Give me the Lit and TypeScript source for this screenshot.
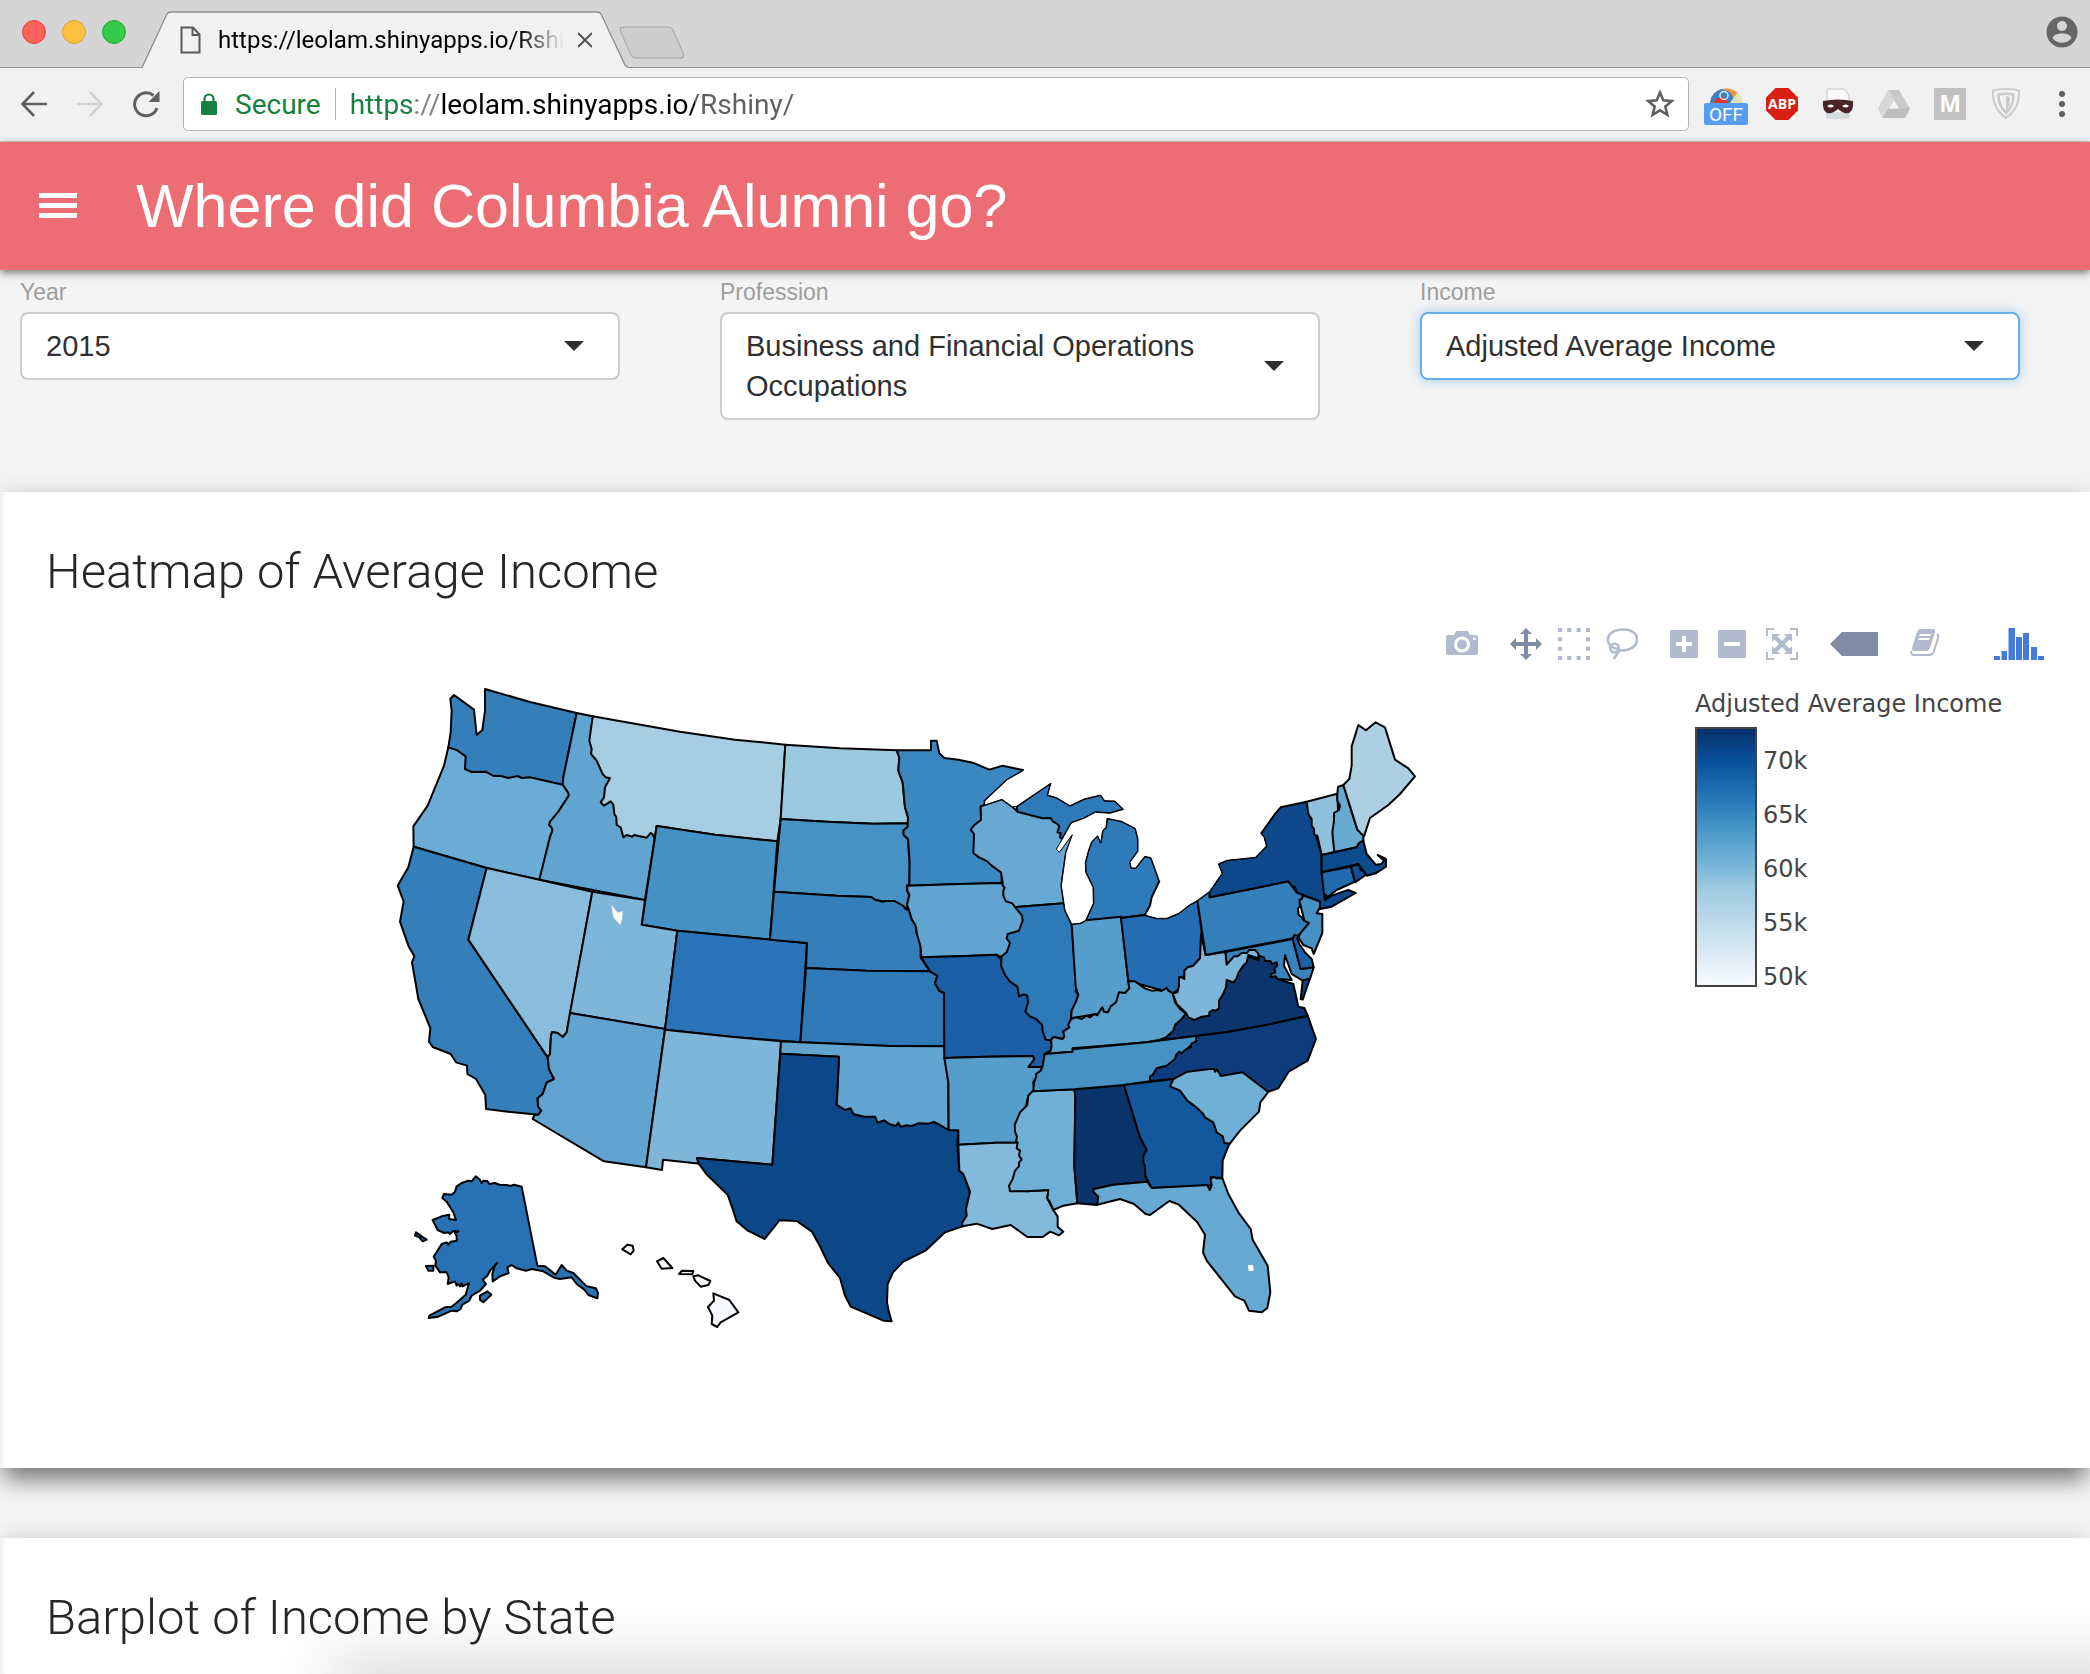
import { LitElement, html, svg, css } from "lit";
import { customElement, property } from "lit/decorators.js";

/* ---------- map data: outlines are drawn on a grid of thirds of a pixel ---------- */

type Sheet = { x: number; y: number };
const WEST: Sheet = { x: 380, y: 670 };
const PLAINS: Sheet = { x: 660, y: 700 };
const LAKES: Sheet = { x: 900, y: 720 };
const NORTHEAST: Sheet = { x: 1140, y: 700 };
const SOUTH: Sheet = { x: 900, y: 1000 };
const ATLANTIC: Sheet = { x: 1150, y: 900 };
const PACIFIC: Sheet = { x: 400, y: 1160 };

interface Region {
  name: string;
  sheet: Sheet;
  fill: string;
  d: string;
}

const r = (name: string, sheet: Sheet, fill: string, d: string): Region => ({ name, sheet, fill, d });

const REGIONS: Region[] = [
  r("Oregon", WEST, "#6aacd5", "M205,235L400,200 548,335 590,375 540,460 478,632 320,597 101,533 100,472 143,410 192,290Z"),
  r("Washington", WEST, "#347fba", "M222,78L282,122 290,198 307,183 315,125 315,60 450,99 590,132 550,325 548,347 450,325 425,327 413,321 385,327 360,320 340,321 317,308 275,309 255,300 257,262 230,243 205,235 212,190 215,125 211,90Z"),
  r("Montana", WEST, "#a6cce1", "M638,142L900,188 1065,212 1216,227 1202,450 1192,517 1005,497 830,471 824,510 720,530 650,400 615,250Z"),
  r("Idaho", WEST, "#62a4d0", "M590,132L638,142 628,215 635,240 633,255 650,275 668,315 677,325 690,328 675,355 672,385 662,400 672,410 692,397 700,407 703,435 709,445 710,468 722,475 730,505 740,498 757,503 762,498 800,506 812,492 818,496 824,510 795,693 478,632 510,503 517,485 515,476 507,468 510,458 535,428 566,380 565,372 548,347 550,325Z"),
  r("Wyoming", WEST, "#4591c4", "M830,471L1005,497 1192,517 1170,812 1065,802 892,785 785,767Z"),
  r("California", WEST, "#347fba", "M101,533L320,597 265,812 503,1165 507,1200 522,1230 500,1241 488,1275 473,1288 474,1312 484,1325 475,1337 400,1330 318,1320 316,1278 288,1230 262,1215 261,1190 228,1180 212,1155 158,1134 147,1118 151,1077 115,990 96,880 103,862 85,830 60,758 71,697 53,650 85,595Z"),
  r("Nevada", WEST, "#8abddb", "M320,597L637,668 560,1090 548,1104 533,1092 517,1089 513,1098 510,1155 503,1165 265,812Z"),
  r("Utah", WEST, "#7eb6d9", "M637,668L795,693 785,767 892,785 855,1080 570,1032Z"),
  r("Arizona", WEST, "#62a4d0", "M570,1032L855,1080 798,1495 672,1477 458,1350 463,1338 475,1337 484,1325 474,1312 473,1288 488,1275 500,1241 522,1230 507,1200 503,1165 510,1155 513,1098 517,1089 533,1092 548,1104 560,1090Z"),
  r("Colorado", PLAINS, "#2a73b8", "M52,695L225,712 441,732 421,1030 220,1014 15,992Z"),
  r("New Mexico", PLAINS, "#7eb6d9", "M15,992L220,1014 363,1027 337,1397 111,1377 120,1394 9,1382 6,1413 -42,1405Z"),
  r("North Dakota", PLAINS, "#9bc9e0", "M376,137L540,148 710,154 718,175 715,215 728,250 735,325 744,355 744,373 640,374 500,368 362,360Z"),
  r("South Dakota", PLAINS, "#4692c5", "M362,360L500,368 640,374 744,373 743,383 730,395 731,408 744,420 749,490 748,557 741,560 741,575 748,588 741,618 747,633 735,625 703,606 668,607 645,602 633,594 530,590 342,578Z"),
  r("Nebraska", PLAINS, "#347fba", "M342,578L530,590 633,594 645,602 668,608 678,606 703,606 730,621 737,631 747,633 755,660 767,680 769,700 778,722 782,745 782,775 810,817 620,815 438,807 441,732 330,722Z"),
  r("Kansas", PLAINS, "#2f79b7", "M438,807L620,815 810,817 832,830 825,853 838,875 852,882 852,1042 690,1041 421,1030Z"),
  r("Oklahoma", PLAINS, "#61a4d0", "M363,1027L421,1030 690,1041 852,1042 855,1080 865,1150 866,1293 700,1320 530,1218 537,1073 361,1064Z"),
  r("Texas", PLAINS, "#0c4787", "M361,1064L537,1073 530,1218 555,1233 572,1228 580,1245 612,1253 645,1253 653,1271 672,1264 690,1276 707,1281 715,1271 722,1283 740,1279 755,1281 775,1273 805,1274 822,1269 840,1278 866,1293 895,1294 892,1337 898,1415 910,1425 930,1478 918,1530 922,1550 906,1575 908,1582 855,1600 798,1654 730,1688 699,1720 683,1755 681,1810 687,1840 695,1867 670,1865 572,1823 555,1790 540,1737 504,1692 479,1640 456,1598 410,1566 358,1564 314,1620 262,1594 230,1567 218,1530 203,1487 138,1424 115,1392 111,1377 337,1397Z"),
  r("Minnesota", LAKES, "#3b87bf", "M-10,94L93,94 93,65 110,65 118,103 133,117 175,122 218,131 268,152 308,140 371,154 322,182 254,246 254,258 242,262 243,303 305,460 305,492 180,495 21,500 28,497 29,430 24,360 11,348 10,335 23,323 24,295 15,265 8,190 -5,155 -2,115Z"),
  r("Iowa", LAKES, "#62a4d0", "M21,500L180,495 305,492 360,564 390,600 350,680 325,715 298,712 289,707 180,712 64,715 62,685 51,645 47,620 35,600 27,573 21,558 28,528 22,515Z"),
  r("Wisconsin", LAKES, "#67a9d3", "M242,262L306,241 337,263 350,275 500,300 520,345 498,400 484,500 492,553 345,564 337,553 318,547 310,530 310,515 314,506 308,500 308,490 303,460 275,440 262,427 237,415 220,402 222,345 212,332 224,317 243,303Z"),
  r("Michigan, upper", LAKES, "#2f7ab8", "M350,262L453,192 443,228 470,236 510,260 552,240 602,228 614,245 645,246 671,271 630,283 586,280 552,298 514,312 487,360 480,355 482,342 472,340 478,322 472,315 458,307 452,297 427,298 352,278Z"),
  r("Michigan", LAKES, "#2f7ab8", "M557,604L580,553 579,505 557,460 556,430 566,392 575,368 593,350 602,370 608,335 618,325 621,298 665,307 706,328 714,360 714,397 690,430 694,447 707,447 734,412 753,416 778,486 755,535 750,560 734,588 663,597Z"),
  r("Missouri", SOUTH, "#1b60a7", "M64,-125L180,-128 289,-133 305,-118 303,-100 440,30 453,124 455,140 452,155 434,165 430,190 427,204 385,204 403,180 398,171 260,173 133,177 132,-18 118,-25 105,-47 112,-70 90,-83Z"),
  r("Illinois", LAKES, "#2e79b7", "M345,564L492,553 495,573 515,615 529,803 527,818 535,828 527,850 515,875 513,900 505,918 508,925 490,937 493,953 487,960 460,954 453,964 437,962 428,937 426,917 408,900 390,892 376,878 384,850 382,830 372,826 357,832 352,803 330,788 315,768 303,740 305,712 320,700 330,672 320,658 323,645 357,635 368,605 366,590Z"),
  r("Indiana", LAKES, "#559dca", "M515,615L540,613 557,604 663,593 685,787 688,808 650,850 622,880 513,898 515,875 527,850 535,828 527,803Z"),
  r("Ohio", LAKES, "#246db3", "M663,597L734,588 770,598 800,598 836,583 868,558 893,544 905,640 902,715 880,740 858,752 835,812 818,823 685,787Z"),
  r("Kentucky", SOUTH, "#5ba1cd", "M453,124L460,114 487,120 493,113 490,97 508,85 505,78 513,60 530,55 545,60 560,50 570,55 583,45 592,49 600,35 607,25 612,38 624,40 632,22 648,10 657,-20 675,-18 688,-32 685,-53 705,-53 735,-32 755,-25 775,-27 785,-24 800,-33 805,-25 818,-17 825,10 842,32 858,43 855,55 845,68 828,82 820,98 798,118 780,122 740,130 518,148 518,158 434,165 452,155 455,140Z"),
  r("Arkansas", SOUTH, "#559dca", "M133,177L260,173 398,171 403,180 385,204 427,204 422,220 408,235 400,250 402,275 385,290 353,431 290,431 175,437 175,394 146,393 145,250Z"),
  r("Louisiana", SOUTH, "#83b9da", "M175,437L290,431 353,431 380,500 380,577 445,573 442,598 460,633 473,653 473,683 490,698 477,709 451,698 428,714 382,714 332,678 277,690 230,674 188,682 186,672 200,650 198,630 210,578 190,525 178,515Z"),
  r("Mississippi", SOUTH, "#6eafd6", "M398,276L523,271 526,290 523,500 532,613 490,620 460,633 450,610 442,598 445,573 380,577 330,577 327,560 338,540 345,515 357,502 357,490 365,482 357,470 360,455 350,448 353,431 348,428 351,413 345,398 344,378 360,340 382,318 385,290Z"),
  r("Alabama", SOUTH, "#0a336a", "M523,271L672,258 720,415 740,453 736,530 742,548 640,557 580,570 582,580 595,593 592,618 532,613 523,500 526,290Z"),
  r("Tennessee", SOUTH, "#4692c5", "M434,165L518,158 518,148 525,150 740,130 889,110 889,125 750,247 672,258 523,271 400,277 402,250 408,235 408,225 422,215 427,204 430,190Z"),
  r("North Carolina", SOUTH, "#0e3c7c", "M889,110L985,98 1100,77 1223,50 1248,120 1223,185 1166,218 1135,268 1106,278 900,260 820,240 750,247 750,232 758,228 770,208 800,200 825,180 828,168 838,158 843,163 860,150 872,145 875,133 889,128Z"),
  r("South Carolina", SOUTH, "#70b0d6", "M820,240L862,218 930,210 942,210 945,218 949,211 958,222 962,231 1028,220 1105,279 1081,310 1077,338 1020,395 988,436 940,430 860,380 795,270Z"),
  r("Georgia", SOUTH, "#13579d", "M672,258L820,240 810,262 840,275 862,305 885,322 892,328 908,343 915,355 940,370 950,400 968,412 973,432 988,434 968,485 967,537 932,535 935,560 922,560 755,567 736,530 735,500 730,490 730,470 740,453 720,415Z"),
  r("Florida", SOUTH, "#66a9d2", "M582,570L640,557 742,548 755,567 922,558 929,573 935,560 932,540 940,534 950,538 967,537 985,585 1015,640 1052,690 1058,722 1103,800 1111,880 1102,927 1085,940 1047,935 1033,905 1005,892 920,785 909,760 915,707 892,670 835,616 808,606 750,648 737,645 702,615 660,600 592,617 595,593 580,578Z"),
  r("Maryland", ATLANTIC, "#3984be", "M226,159L428,120 452,210 491,205 480,240 458,245 425,225 405,168 402,200 425,243 382,240 340,230 330,172 290,190 230,197Z"),
  r("Virginia", ATLANTIC, "#0c356e", "M25,424L48,415 70,395 75,378 95,360 108,342 200,240 290,170 325,185 328,170 342,175 345,185 362,187 365,195 380,190 382,200 373,207 376,220 363,225 362,235 377,232 382,240 430,255 445,323 463,327 473,350 350,377 235,398 139,410Z"),
  r("Virginia, eastern shore", ATLANTIC, "#0e4486", "M480,238L458,302 452,300 458,245Z"),
  r("West Virginia", ATLANTIC, "#7eb6d9", "M153,105L167,168 226,159 230,197 252,172 262,172 275,162 290,162 298,153 315,153 325,163 325,178 295,168 290,190 280,200 265,222 260,238 250,250 230,243 228,265 217,290 207,305 207,328 197,335 188,333 178,340 178,350 155,353 133,363 115,355 108,342 80,315 68,283 82,280 87,262 87,235 95,235 103,240 103,215 113,205 130,200 150,178Z"),
  r("Delaware", ATLANTIC, "#1c60a8", "M428,120L435,107 447,108 442,118 448,135 465,160 485,180 491,205 452,210Z"),
  r("New Jersey", NORTHEAST, "#4591c4", "M490,590L540,607 540,625 530,643 547,645 547,702 521,765 515,748 490,738 475,715 495,672 478,605Z"),
  r("Pennsylvania", NORTHEAST, "#347fba", "M172,604L209,577 209,595 445,547 470,580 490,588 485,600 478,603 480,622 474,628 476,648 485,655 492,665 507,672 475,710 463,708 458,718 197,768 185,690Z"),
  r("New York", NORTHEAST, "#0d488a", "M209,595L209,577 246,523 235,495 260,484 346,475 379,441 372,415 362,405 405,345 422,325 500,308 545,470 545,520 553,590 555,603 575,590 625,573 647,582 575,623 540,630 540,607 490,588 470,580 465,565 455,560 445,547Z"),
  r("Vermont", NORTHEAST, "#8fc0dc", "M500,308L592,284 597,400 583,460 545,468 532,410 523,408 522,390 515,380 515,360 505,345Z"),
  r("New Hampshire", NORTHEAST, "#67a9d1", "M592,284L594,264 610,258 652,392 670,410 670,425 650,445 583,460 577,400 582,365 582,342 597,333 600,320 592,305Z"),
  r("Maine", NORTHEAST, "#accfe2", "M610,258L628,240 635,200 635,142 655,78 678,94 707,70 735,85 765,182 805,208 825,232 780,285 745,318 690,357 672,412 652,392Z"),
  r("Massachusetts", NORTHEAST, "#0d4b8f", "M545,468L650,445 657,432 670,425 680,465 707,497 725,495 732,485 713,468 738,480 738,503 707,523 680,530 655,495 545,520Z"),
  r("Connecticut", NORTHEAST, "#236bb1", "M545,520L633,503 645,548 590,573 555,600 560,590 552,585Z"),
  r("Rhode Island", NORTHEAST, "#0f5095", "M633,503L655,495 662,513 672,518 677,528 645,550Z"),
  r("Alaska", PACIFIC, "#2872b4", "M227,52L238,60 245,72 250,65 262,66 268,75 285,72 300,78 320,78 332,81 342,77 365,83 412,320 435,322 467,347 485,318 500,335 520,342 560,382 588,388 594,402 592,418 565,408 553,392 530,375 515,355 480,360 462,356 430,337 395,330 378,335 350,328 335,318 322,325 326,342 300,352 278,367 277,345 285,318 292,312 270,335 262,350 248,362 258,375 240,395 215,410 208,425 187,437 182,450 170,457 155,455 115,473 86,477 88,470 135,445 155,443 175,427 197,407 207,373 195,378 187,382 185,373 180,382 175,375 170,380 165,367 143,375 146,355 140,340 120,340 106,320 108,305 101,293 125,255 140,250 145,257 152,248 170,245 170,232 165,222 175,217 160,216 150,225 145,220 133,222 113,213 98,183 125,172 148,167 147,180 168,183 160,160 140,128 127,117 132,105 155,107 165,98 170,82 185,72 205,65 215,67ZM48,220L65,232 80,242 68,247 58,235 45,230ZM78,321L100,320 100,335 85,335ZM240,410L262,397 274,407 250,430 240,422Z"),
  r("Hawaii", PACIFIC, "#f5f9fe", "M667,271L682,257 698,260 701,275 692,286ZM771,307L790,297 817,327 785,329ZM837,345L846,335 880,336 877,346ZM880,352L895,349 931,366 925,378 902,383 885,365ZM940,403L988,423 1015,460 962,490 952,504 935,495 937,470 924,444 942,425Z"),
];

/* Shorelines of the Great Lakes, and the points that close each one over open water. */
const SHORES = [
  {
    line: "M371,154L322,182 254,246 254,258 306,241 337,263 350,262 453,192 443,228 470,236 510,260 552,240 602,228 614,245 645,246 671,271",
    close: " 700,271 700,100 390,130Z",
  },
  {
    line: "M671,271L630,283 586,280 552,298 514,312 487,360 469,390 478,400 517,347 498,400 484,500 492,553 495,573 515,615 540,613 557,604 580,553 579,505 557,460 556,430 566,392 575,368 593,350 602,370 608,335 618,325 621,298 665,307 706,328 714,360 714,397 690,430 694,447 707,447 734,412 753,416 778,486",
    close: " 800,480 800,271Z",
  },
  {
    line: "M734,588L770,598 800,598 836,583 868,558 893,544 929,517 966,463 955,435 980,424 1066,415 1099,381 1092,355 1084,345",
    close: " 1060,330 850,480 800,560 765,583Z",
  },
];

const place = (s: Sheet) => `translate(${s.x} ${s.y}) scale(${1 / 3})`;

@customElement("income-map")
class IncomeMap extends LitElement {
  static styles = css`
    :host { display: block; }
    .map { display: block; width: 100%; height: auto; }
    .state { stroke: #000; stroke-width: 6; stroke-linejoin: round; }
    .water { fill: #fff; }
    .shore { fill: none; stroke: #000; stroke-width: 3; stroke-linejoin: round; }
  `;

  render() {
    return html`
      <svg class="map" viewBox="0 670 1695 680" role="img" aria-label="Map of the United States">
        ${REGIONS.map((s) => svg`<path class="state" fill=${s.fill} d=${s.d} transform=${place(s.sheet)}></path>`)}
        <g transform=${place(LAKES)}>
          ${SHORES.map((s) => svg`<path class="water" d=${s.line + s.close}></path><path class="shore" d=${s.line}></path>`)}
        </g>
        <path class="water" transform=${place(WEST)} d="M694,708L713,731 728,727 727,745 721,768 700,745Z"></path>
        <path class="water" transform=${place(SOUTH)} d="M1044,798h15l2,18h-15z"></path>
      </svg>
    `;
  }
}

@customElement("color-legend")
class ColorLegend extends LitElement {
  @property() heading = "";

  static styles = css`
    :host { display: block; color: #444; font: 24px/28px "DejaVu Sans", Verdana, sans-serif; white-space: nowrap; }
    .scale { display: flex; gap: 6px; margin-top: 9px; }
    .bar {
      width: 62px; height: 260px; box-sizing: border-box; border: 2px solid #444;
      background: linear-gradient(#08306b, #08519c 12.5%, #2171b5 25%, #4292c6 37.5%, #6baed6 50%, #9ecae1 62.5%, #c6dfec 79%, #deebf7 89%, #f7fbff);
    }
    .ticks { margin: 7px 0 0; padding: 0; list-style: none; line-height: 54px; }
  `;

  render() {
    return html`
      <div>${this.heading}</div>
      <div class="scale">
        <div class="bar"></div>
        <ul class="ticks">${["70k", "65k", "60k", "55k", "50k"].map((t) => html`<li>${t}</li>`)}</ul>
      </div>
    `;
  }
}

/* ---------- chart tool bar ---------- */

const TOOL_GROUPS = [
  [{ label: "Download plot as a png", on: false, w: 32, icon: svg`<path fill-rule="evenodd" d="M2 7h6l2-4h12l2 4h6q2 0 2 2v16q0 2-2 2H2q-2 0-2-2V9q0-2 2-2zM16 8.500a8 8 0 1 0 0 16a8 8 0 1 0 0-16zM27 9.500v2.500h2.500V9.500z"/><circle cx="16" cy="16.500" r="5"/>` }],
  [
    { label: "Pan", on: true, w: 32, icon: svg`<path d="M16 0l6 6h-4v8h8v-4l6 6-6 6v-4h-8v8h4l-6 6-6-6h4v-8H6v4l-6-6 6-6v4h8V6h-4z"/>` },
    { label: "Box select", on: false, w: 32, icon: svg`<path d="M2 0V32M30 0V32" stroke="currentColor" stroke-width="4" stroke-dasharray="4 5.330" fill="none"/><path d="M9.300 2H32M9.300 30H32" stroke="currentColor" stroke-width="4" stroke-dasharray="4 5.330" fill="none"/>` },
    { label: "Lasso select", on: false, w: 32, icon: svg`<g fill="none" stroke="currentColor" stroke-width="2.600"><path d="M4 17.500C-1 11 3 1.500 17 1.500c9 0 14 4 14 9.500 0 7-7.500 13-17.500 11"/><circle cx="8.500" cy="20" r="4.300"/><path d="M6 18c1 4 8 1 7 5-1 3-4 4-5 8"/></g>` },
  ],
  [
    { label: "Zoom in", on: false, w: 32, icon: svg`<path fill-rule="evenodd" d="M0 2h28v28H0zM12 8v6H6v4h6v6h4v-6h6v-4h-6V8z"/>` },
    { label: "Zoom out", on: false, w: 32, icon: svg`<path fill-rule="evenodd" d="M0 2h28v28H0zM6 14v4h16v-4z"/>` },
    { label: "Reset", on: false, w: 32, icon: svg`<path d="M0 8V0h8v2H2v6zM24 0h8v8h-2V2h-6zM0 24h2v6h6v2H0zM30 24h2v8h-8v-2h6zM6 6h8l-2.500 2.500L16 13l4.500-4.500L18 6h8v8l-2.500-2.500L19 16l4.500 4.500L26 18v8h-8l2.500-2.500L16 19l-4.500 4.500L14 26H6v-8l2.500 2.500L13 16l-4.500-4.500L6 14z"/>` },
  ],
  [{ label: "Show closest data on hover", on: true, w: 48, icon: svg`<path d="M0 16L12 4h36v24H12z"/>` }],
  [{ label: "Edit in workspace", on: false, w: 32, icon: svg`<path fill-rule="evenodd" d="M10 1h13q3 0 2 3l-5 16q-1 3-4 3H4q-3 0-2-3L7 4q1-3 3-3zM10 6l-1 2h11l1-2zM9 10l-1 2h11l1-2z"/><path d="M27 6q2 1 1 4l-4 13q-1 4-5 4H4q-3 0-3-4" fill="none" stroke="currentColor" stroke-width="2"/>` }],
];

@customElement("chart-tools")
class ChartTools extends LitElement {
  static styles = css`
    :host { display: flex; justify-content: flex-end; gap: 32px; padding-right: 46px; }
    .group { display: flex; gap: 16px; }
    .tool { display: block; padding: 0; border: 0; background: none; color: #b2bacd; }
    .tool.on { color: #808ba4; }
    .icon { display: block; fill: currentColor; }
    .logo { display: block; margin-left: 20px; color: #447adb; }
  `;

  render() {
    return html`
      ${TOOL_GROUPS.map((g) => html`
        <div class="group">
          ${g.map((t) => html`
            <button class="tool ${t.on ? "on" : ""}" aria-label=${t.label}>
              <svg class="icon" width=${t.w} height="32" viewBox="0 0 ${t.w} 32">${t.icon}</svg>
            </button>`)}
        </div>`)}
      <a class="logo" href="#" aria-label="Produced with Plotly">
        <svg class="icon" width="50" height="32" viewBox="0 0 50 32">
          <path d="M0 28h6v4H0zM7.500 23h5.500v9H7.500zM14.500 0H21v32h-6.500zM22 9h6v23h-6zM29 5h6v27h-6zM37 19h6v13h-6zM44 28h6v4h-6z"/>
        </svg>
      </a>
    `;
  }
}

/* ---------- browser frame ---------- */

@customElement("browser-bar")
class BrowserBar extends LitElement {
  static styles = css`
    :host { display: block; font-family: Roboto, "Open Sans", sans-serif; }
    .strip {
      display: flex; height: 68px; box-sizing: border-box; padding: 0 12px 0 22px;
      background: linear-gradient(#8e8e8e, #8e8e8e) bottom / 100% 1px no-repeat, #d5d5d5;
    }
    .lights { display: flex; gap: 16px; align-items: center; height: 64px; }
    .light { width: 24px; height: 24px; box-sizing: border-box; padding: 0; border-radius: 50%; border: 1px solid #e2463f; background: #fe605c; }
    .light.amber { background: #fec041; border-color: #dfa036; }
    .light.green { background: #34ca4a; border-color: #27aa35; }
    .tab { position: relative; width: 486px; height: 57px; margin: 11px 0 0 16px; display: flex; align-items: center; box-sizing: border-box; padding: 0 36px 0 38px; }
    .shape { position: absolute; inset: 0; }
    .page, .title, .close { position: relative; }
    .title { flex: 1; margin-left: 17px; font-size: 24px; line-height: 32px; overflow: hidden; white-space: nowrap; color: #000; mask-image: linear-gradient(90deg, #000 300px, transparent 346px); }
    .close { padding: 0; margin-left: 10px; border: 0; background: none; display: block; }
    .newtab { display: block; padding: 0; border: 0; background: none; margin: 26px auto 0 -9px; height: 33px; }
    .newtab svg, .avatar svg, .close svg, .page, .nav svg, .ext svg { display: block; }
    .avatar { padding: 0; border: 0; background: none; height: 64px; }
    .toolbar { display: flex; align-items: center; height: 74px; box-sizing: border-box; padding: 0 12px 2px 18px; background: #f1f1f1; border-bottom: 1px solid #d0cfcf; gap: 24px; }
    .nav, .ext { padding: 0; border: 0; background: none; color: #5f6062; }
    .nav.off { color: #d2d2d2; }
    .omni { flex: 1; display: flex; align-items: center; height: 54px; box-sizing: border-box; margin: 0 -9px 0 -3px; padding: 0 12px 0 17px; background: #fff; border: 1px solid #b4b4b4; border-radius: 5px; font-size: 28px; }
    .lock { display: block; margin-right: 18px; }
    .secure { color: #168043; padding: 2px 14px 0 0; border-right: 1px solid #b4b4b4; line-height: 30px; }
    .url {
      flex: 1; min-width: 0; margin-left: 14px; padding: 2px 0 0; border: 0; outline: 0; font: inherit; line-height: 36px; color: transparent;
      background: linear-gradient(90deg, #168043 66px, #808080 66px 92px, #000 92px 345px, #606060 345px); -webkit-background-clip: text; background-clip: text;
    }
    .wide { margin-right: -6px; }
  `;

  render() {
    return html`
      <div class="strip">
        <div class="lights">
          <button class="light" aria-label="Close window"></button>
          <button class="light amber" aria-label="Minimise window"></button>
          <button class="light green" aria-label="Full screen"></button>
        </div>
        <div class="tab">
          <svg class="shape" width="486" height="57" viewBox="0 0 486 57">
            <path d="M0 57L1 55.500 25 3Q26 1 29 1H455Q458 1 459 3L483 54 486 57Z" fill="#f1f1f1"/>
            <path d="M0 56.500L25 3Q26 1 29 1H455Q458 1 459 3L483 54 486 56.500" fill="none" stroke="#8e8e8e" stroke-width="1.300"/>
          </svg>
          <svg class="page" width="21" height="28" viewBox="0 0 21 28"><path d="M1.500 1.500H13L19.500 8.500V26.500H1.500ZM12.500 1.500V9H19.500" fill="none" stroke="#5a5a5a" stroke-width="2"/></svg>
          <span class="title">https://leolam.shinyapps.io/Rshiny/</span>
          <button class="close" aria-label="Close tab"><svg width="14" height="16" viewBox="0 0 14 16"><path d="M0 1L14 15M14 1L0 15" stroke="#555" stroke-width="2"/></svg></button>
        </div>
        <button class="newtab" aria-label="New tab">
          <svg width="67" height="33" viewBox="0 0 67 33"><path d="M4 1H49Q53 1 54 4L65 29Q65 32 62 32H17Q13 32 12 29L1 4Q1 1 4 1Z" fill="#cdcdcd" stroke="#a3a3a3"/></svg>
        </button>
        <button class="avatar" aria-label="Profile">
          <svg width="32" height="32" viewBox="0 0 32 32"><path fill-rule="evenodd" fill="#666" d="M16 .5a15.500 15.500 0 1 0 0 31a15.500 15.500 0 1 0 0-31zM16 5a5 5 0 1 1 0 10a5 5 0 1 1 0-10zM16 17.500c5 0 9 2 9.500 4.500-2 3-5.500 4.700-9.500 4.700s-7.500-1.700-9.500-4.700c.5-2.500 4.500-4.500 9.500-4.500z"/></svg>
        </button>
      </div>
      <div class="toolbar">
        <button class="nav" aria-label="Back"><svg width="32" height="32" viewBox="0 0 32 32" fill="none" stroke="currentColor" stroke-width="2.600"><path d="M29 16H5M16 4L4.500 16 16 28"/></svg></button>
        <button class="nav off" aria-label="Forward"><svg width="32" height="32" viewBox="0 0 32 32" fill="none" stroke="currentColor" stroke-width="2.600"><path d="M3 16H27M16 4L27.500 16 16 28"/></svg></button>
        <button class="nav" aria-label="Reload"><svg width="32" height="32" viewBox="0 0 32 32"><path d="M27 20a11.500 11.500 0 1 1-3.500-12.500" fill="none" stroke="currentColor" stroke-width="3"/><path d="M29.500 3V14H18.500Z" fill="currentColor"/></svg></button>
        <div class="omni">
          <svg class="lock" width="16" height="22" viewBox="0 0 16 22"><path d="M3.500 9V6a4.500 4.500 0 0 1 9 0V9" fill="none" stroke="#168043" stroke-width="2.200"/><rect y="8" width="16" height="14" rx="1.500" fill="#168043"/></svg>
          <span class="secure">Secure</span>
          <input class="url" aria-label="Address" value="https://leolam.shinyapps.io/Rshiny/">
          <button class="nav" aria-label="Bookmark this page"><svg width="32" height="32" viewBox="0 0 32 32"><path d="M16 4.500L19.300 12.300 27.700 13 21.300 18.500 23.300 26.800 16 22.300 8.700 26.800 10.700 18.500 4.300 13 12.700 12.300Z" fill="none" stroke="currentColor" stroke-width="2.600"/></svg></button>
        </div>
        <button class="ext wide" aria-label="Palette, off">
          <svg width="44" height="42" viewBox="0 0 44 42">
            <path d="M6 20Q8 6 22 5.500 36 6 38 20Z" fill="#ee9a3a"/><path d="M6 20Q7 9 18 6 30 8 30 20Z" fill="#3c83c4"/><path d="M10 20a6 5 0 0 1 14 0z" fill="#e3342b"/><circle cx="20" cy="12.500" r="4" fill="none" stroke="#d8ecf8" stroke-width="1.500"/><path d="M26 20L33 10 38 14V20Z" fill="#dfe3b8"/>
            <rect y="20" width="44" height="22" rx="2" fill="#569cf2"/><text x="22" y="38" text-anchor="middle" font-family="Roboto, sans-serif" font-size="19" fill="#fff">OFF</text>
          </svg>
        </button>
        <button class="ext" aria-label="Adblock Plus">
          <svg width="32" height="32" viewBox="0 0 32 32"><path d="M9.500 0h13L32 9.500v13L22.500 32h-13L0 22.500v-13z" fill="#d71f12"/><text x="16" y="21" text-anchor="middle" font-family="'Open Sans', sans-serif" font-weight="700" font-size="14" fill="#fff">ABP</text></svg>
        </button>
        <button class="ext" aria-label="Mask">
          <svg width="32" height="32" viewBox="0 0 32 32"><path d="M5 1H22L27 7V30H5Z" fill="#fafafa" stroke="#c3c6c3"/><path d="M5 24H27V30H5Z" fill="#d5dce0"/><path d="M1 13Q16 10 31 13 32 22 27 25 21 26 16 21 11 26 5 25 0 22 1 13Z" fill="#4b2425"/><path d="M5 18q4-3 7 0-3 3-7 0zM20 18q4-3 7 0-3 3-7 0z" fill="#fff"/></svg>
        </button>
        <button class="ext" aria-label="Drive">
          <svg width="32" height="32" viewBox="0 0 32 32"><path d="M10.500 2H21L32 20.500 27 30H5L0 20.500Z" fill="#c9c9c9"/><path d="M10.500 2L16 11.500 5 30 0 20.500Z" fill="#d8d8d8"/><path d="M10.500 20.500H32L27 30H5Z" fill="#bdbdbd"/><path d="M16 12L21 20.500H11Z" fill="#f6f6f6"/></svg>
        </button>
        <button class="ext" aria-label="Mail">
          <svg width="32" height="32" viewBox="0 0 32 32"><rect width="32" height="32" rx="1" fill="#c1c1c1"/><text x="16" y="24" text-anchor="middle" font-family="'Open Sans', sans-serif" font-weight="700" font-size="23" fill="#fff">M</text></svg>
        </button>
        <button class="ext" aria-label="Shield">
          <svg width="32" height="32" viewBox="0 0 32 32" fill="none" stroke="#cacaca"><path d="M3 2.500Q16-.5 29 2.500 30 20 16 30 2 20 3 2.500Z" stroke-width="2"/><path d="M8.500 6.500Q16 5 23.500 6.500 23.500 18 16 25 8.500 18 8.500 6.500Z" stroke-width="2.500"/><path d="M16 8v15q4-4 4-14z" fill="#cacaca" stroke="none"/></svg>
        </button>
        <button class="ext" aria-label="Menu">
          <svg width="32" height="32" viewBox="0 0 32 32" fill="currentColor"><circle cx="16" cy="6" r="3"/><circle cx="16" cy="16" r="3"/><circle cx="16" cy="26" r="3"/></svg>
        </button>
      </div>
    `;
  }
}

/* ---------- page ---------- */

const FILTERS = [
  { id: "year", label: "Year", value: "2015", active: false },
  { id: "profession", label: "Profession", value: "Business and Financial Operations Occupations", active: false },
  { id: "income", label: "Income", value: "Adjusted Average Income", active: true },
];

@customElement("app-root")
class AppRoot extends LitElement {
  static styles = css`
    :host { display: flex; flex-direction: column; position: relative; height: 100vh; overflow: hidden; background: #f4f4f4; color: #2b2b2b; font-family: "Liberation Sans", Arial, sans-serif; }
    browser-bar, .header, .filters, .card { flex: none; }
    .header { position: relative; z-index: 1; display: flex; align-items: center; gap: 59px; height: 128px; box-sizing: border-box; padding: 0 39px; background: #ec6e74; color: #fff; box-shadow: 0 3px 8px rgba(0, 0, 0, .5); }
    .burger { padding: 0; border: 0; background: none; }
    .burger svg { display: block; }
    .brand { margin: 0; font-size: 61px; line-height: 72px; font-weight: 400; white-space: nowrap; }
    .filters { display: grid; grid-template-columns: repeat(3, minmax(0, 1fr)); gap: 100px; align-items: start; padding: 8px 70px 72px 20px; }
    .field { display: grid; gap: 6px; }
    .label { font-size: 23px; line-height: 28px; color: #9e9e9e; }
    .select {
      appearance: none; width: 100%; box-sizing: border-box; margin: 0; padding: 12px 110px 12px 24px; border: 2px solid #ccc; border-radius: 8px; white-space: normal;
      background: #fff; color: #303030; font: 29px/40px "Liberation Sans", Arial, sans-serif;
    }
    .box { display: grid; align-items: center; }
    .box > * { grid-area: 1 / 1; }
    .arrow { justify-self: end; margin-right: 36px; width: 20px; height: 10px; pointer-events: none; }
    .select.active { border-color: #66afe9; box-shadow: 0 0 12px rgba(102, 175, 233, .6); }
    .card { background: #fff; box-shadow: 0 16px 22px -4px rgba(0, 0, 0, .45), 0 2px 24px rgba(0, 0, 0, .15), inset 8px 0 8px -8px rgba(0, 0, 0, .12); }
    .card + .card { margin-top: 70px; }
    .main { padding-bottom: 119px; }
    .rest { flex: 1 0 auto; }
    .heading { margin: 0; padding: 50px 46px 26px; font: 300 49px/60px Roboto, "Liberation Sans", sans-serif; color: #262626; }
    .chart { display: grid; grid-template-columns: minmax(0, 1695fr) minmax(0, 395fr); margin-top: 9px; }
    .legend { margin-top: 21px; }
    .veil { position: absolute; left: 340px; right: -60px; top: 100%; height: 20px; box-shadow: 0 0 60px 10px rgba(0, 0, 0, .2); pointer-events: none; }
  `;

  render() {
    return html`
      <browser-bar></browser-bar>
      <header class="header">
        <button class="burger" aria-label="Open menu">
          <svg width="38" height="26" viewBox="0 0 38 26" fill="#fff"><path d="M0 0H38V5H0ZM0 10H38V15H0ZM0 20H38V25H0Z"/></svg>
        </button>
        <h1 class="brand">Where did Columbia Alumni go?</h1>
      </header>
      <form class="filters">
        ${FILTERS.map((f) => html`
          <div class="field">
            <label class="label" for=${f.id}>${f.label}</label>
            <div class="box">
              <select id=${f.id} class="select ${f.active ? "active" : ""}"><option>${f.value}</option></select>
              <svg class="arrow" viewBox="0 0 20 10"><path d="M0 0H20L10 10Z" fill="#303030"/></svg>
            </div>
          </div>`)}
      </form>
      <section class="card main">
        <h2 class="heading">Heatmap of Average Income</h2>
        <chart-tools></chart-tools>
        <div class="chart">
          <income-map></income-map>
          <color-legend class="legend" heading="Adjusted Average Income"></color-legend>
        </div>
      </section>
      <section class="card rest">
        <h2 class="heading">Barplot of Income by State</h2>
      </section>
      <div class="veil"></div>
    `;
  }
}
